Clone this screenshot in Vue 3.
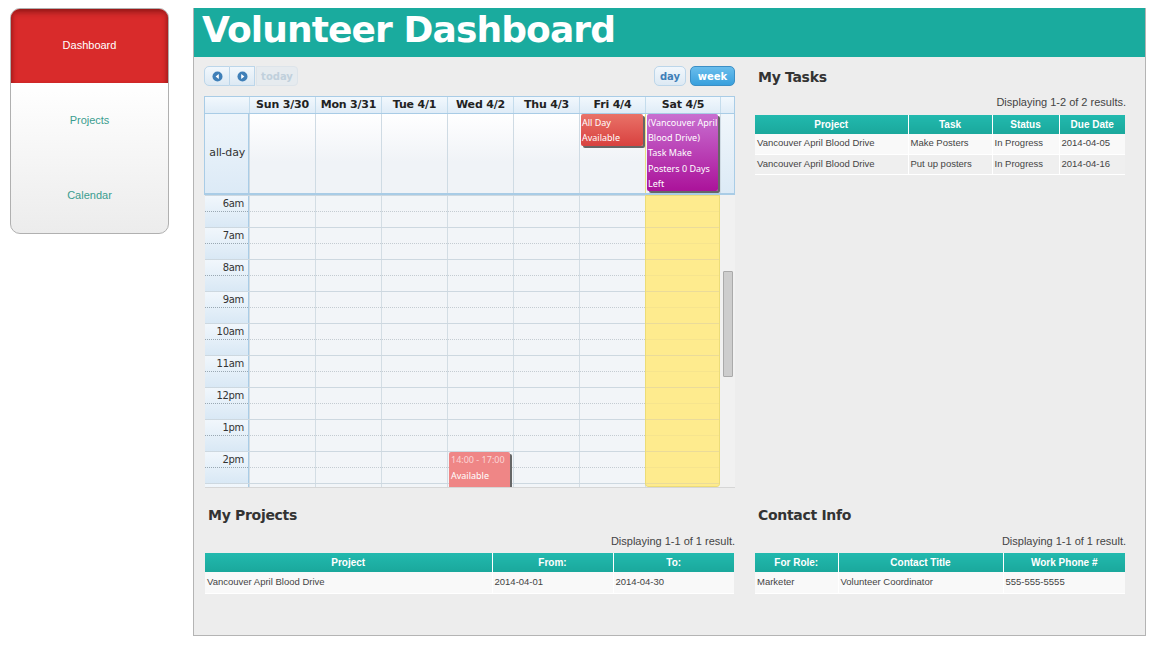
<template>
  <div class="page">
    <nav class="sidebar">
      <a v-for="(item, i) in menu" :key="item" class="menu-item" :class="{ active: i === 0 }">{{ item }}</a>
    </nav>

    <main class="main">
      <h1 class="title">Volunteer Dashboard</h1>

      <div class="content">
        <section class="calendar">
          <div class="toolbar">
            <div class="btn-group">
              <button class="cal-btn first">
                <svg width="11" height="11" viewBox="0 0 11 11"><circle cx="5.5" cy="5.5" r="5" fill="#3f7fb8" /><path d="M6.8 3 3.6 5.5 6.8 8z" fill="#fff" /></svg>
              </button>
              <button class="cal-btn">
                <svg width="11" height="11" viewBox="0 0 11 11"><circle cx="5.5" cy="5.5" r="5" fill="#3f7fb8" /><path d="M4.2 3 7.4 5.5 4.2 8z" fill="#fff" /></svg>
              </button>
              <button class="cal-btn today">today</button>
            </div>
            <div class="views">
              <button class="cal-btn view">day</button>
              <button class="cal-btn view on">week</button>
            </div>
          </div>

          <div class="cal-row head-row">
            <div class="axis"></div>
            <div v-for="d in days" :key="d" class="day-head">{{ d }}</div>
            <div class="gutter"></div>
          </div>

          <div class="cal-row allday-row">
            <div class="axis allday-label">all-day</div>
            <div v-for="d in days" :key="d" class="allday-cell"></div>
            <div class="gutter"></div>
            <div class="event allday-event red">All Day<br />Available</div>
            <div class="event allday-event purple">(Vancouver April<br />Blood Drive)<br />Task Make<br />Posters 0 Days<br />Left</div>
          </div>

          <div class="scroller">
            <div class="time-grid">
              <div v-for="h in hours" :key="h" class="cal-row hour-row">
                <div class="axis hour-label"><span>{{ h }}</span></div>
                <div v-for="d in days" :key="d" class="hour-cell"></div>
              </div>
              <div class="today-col"></div>
              <div class="event timed">
                <div class="time">14:00 - 17:00</div>
                <div>Available</div>
              </div>
            </div>
            <div class="scrollbar"><div class="thumb"></div></div>
          </div>
        </section>

        <section class="panel tasks">
          <h2>My Tasks</h2>
          <p class="summary">Displaying 1-2 of 2 results.</p>
          <table>
            <colgroup><col style="width:153px" /><col style="width:84px" /><col style="width:67px" /><col style="width:66px" /></colgroup>
            <thead><tr><th>Project</th><th>Task</th><th>Status</th><th>Due Date</th></tr></thead>
            <tbody>
              <tr v-for="t in tasks" :key="t[1]"><td v-for="c in t" :key="c">{{ c }}</td></tr>
            </tbody>
          </table>
        </section>

        <section class="panel projects">
          <h2>My Projects</h2>
          <p class="summary">Displaying 1-1 of 1 result.</p>
          <table>
            <colgroup><col style="width:287px" /><col style="width:121px" /><col style="width:121px" /></colgroup>
            <thead><tr><th>Project</th><th>From:</th><th>To:</th></tr></thead>
            <tbody>
              <tr><td>Vancouver April Blood Drive</td><td>2014-04-01</td><td>2014-04-30</td></tr>
            </tbody>
          </table>
        </section>

        <section class="panel contact">
          <h2>Contact Info</h2>
          <p class="summary">Displaying 1-1 of 1 result.</p>
          <table>
            <colgroup><col style="width:83px" /><col style="width:165px" /><col style="width:122px" /></colgroup>
            <thead><tr><th>For Role:</th><th>Contact Title</th><th>Work Phone #</th></tr></thead>
            <tbody>
              <tr><td>Marketer</td><td>Volunteer Coordinator</td><td>555-555-5555</td></tr>
            </tbody>
          </table>
        </section>
      </div>
    </main>
  </div>
</template>

<script setup>
const menu = ['Dashboard', 'Projects', 'Calendar']
const days = ['Sun 3/30', 'Mon 3/31', 'Tue 4/1', 'Wed 4/2', 'Thu 4/3', 'Fri 4/4', 'Sat 4/5']
const hours = ['6am', '7am', '8am', '9am', '10am', '11am', '12pm', '1pm', '2pm', '3pm']
const tasks = [
  ['Vancouver April Blood Drive', 'Make Posters', 'In Progress', '2014-04-05'],
  ['Vancouver April Blood Drive', 'Put up posters', 'In Progress', '2014-04-16']
]
</script>

<style>
html, body {
  background: #fff;
}
</style>

<style scoped>
.page {
  display: flex;
  align-items: flex-start;
  gap: 24px;
  padding: 8px 8px 0 10px;
  width: 1154px;
  height: 646px;
  box-sizing: border-box;
  overflow: hidden;
  font-family: "Liberation Sans", Arial, sans-serif;
}

.sidebar {
  width: 159px;
  flex: none;
  box-sizing: border-box;
  height: 226px;
  border: 1px solid #b0b0b0;
  border-radius: 10px;
  overflow: hidden;
  background: linear-gradient(#fff 33%, #ececec);
}
.menu-item {
  display: flex;
  height: 75px;
  box-sizing: border-box;
  padding-bottom: 1px;
  align-items: center;
  justify-content: center;
  font-size: 11px;
  color: #3a9d8f;
}
.menu-item.active {
  height: 74px;
  padding-bottom: 2px;
  color: #fff;
  background: #d92b2b;
  box-shadow: inset 0 6px 6px -3px #8f1717, inset 4px 0 5px -3px #9a1a1a, inset -4px 0 5px -3px #9a1a1a;
}

.main {
  width: 953px;
  height: 628px;
  flex: none;
  box-sizing: border-box;
  border: 1px solid #b4b4b4;
  border-top: 0;
  background: #ededed;
}
.title {
  margin: 0;
  height: 49px;
  padding-left: 8px;
  background: #1aab9e;
  color: #fff;
  letter-spacing: -0.9px;
  font: bold 36px/44px "DejaVu Sans", Verdana, sans-serif;
}

.content {
  display: grid;
  grid-template-columns: 531px 371px;
  grid-template-rows: 431px auto;
  column-gap: 20px;
  padding: 9px 0 0 10px;
}

.calendar {
  font-family: "DejaVu Sans", Verdana, sans-serif;
}
.toolbar {
  display: flex;
  justify-content: space-between;
  height: 30px;
}
.btn-group,
.views {
  display: flex;
  height: 20px;
}
.views {
  gap: 4px;
}
.cal-btn {
  box-sizing: border-box;
  width: 25px;
  height: 20px;
  padding: 0;
  display: flex;
  align-items: center;
  justify-content: center;
  border: 1px solid #bcd6ea;
  border-left-width: 0;
  background: linear-gradient(#f1f7fc, #dde9f3);
  font: bold 10px "DejaVu Sans", Verdana, sans-serif;
  color: #3f7fb8;
}
.cal-btn.first {
  width: 26px;
  border-left-width: 1px;
  border-radius: 5px 0 0 5px;
}
.cal-btn.today {
  width: 42px;
  margin-left: 1px;
  border: 1px solid #dde4ea;
  border-radius: 0 4px 4px 0;
  background: #e6ebef;
  color: #c0d0dc;
}
.cal-btn.view {
  width: 32px;
  border-left-width: 1px;
  border-radius: 5px;
}
.cal-btn.view.on {
  width: 45px;
  color: #fff;
  background: linear-gradient(#69bdec, #39a0dd);
  border-color: #3b8fc6;
}

.cal-row {
  display: grid;
  grid-template-columns: 44px repeat(6, 66px) 75px 14px;
}
.head-row {
  height: 17px;
  box-sizing: border-box;
  border: 1px solid #a9cce6;
  background: linear-gradient(#f2f8fd, #dfecf7);
  border-bottom: 0;
}
.day-head {
  border-left: 1px solid #c4dcec;
  text-align: center;
  font-size: 11px;
  font-weight: bold;
  line-height: 15px;
  color: #222;
  letter-spacing: -0.2px;
}
.gutter {
  border-left: 1px solid #c4dcec;
}
.allday-row {
  position: relative;
  height: 82px;
  box-sizing: border-box;
  border: 1px solid #a9cce6;
  border-bottom-width: 2px;
  background: linear-gradient(#fff, #f0f3f7 60%);
}
.axis {
  background: linear-gradient(#f4f9fd, #dbe9f5);
  box-sizing: border-box;
  border-right: 1px solid #a9cce6;
}
.head-row .axis {
  background: none;
  border-right: 0;
}
.allday-label {
  font-size: 11px;
  letter-spacing: -0.2px;
  line-height: 78px;
  color: #333;
  text-align: right;
  padding-right: 3px;
  background: linear-gradient(#eef5fb, #dceaf6);
}
.allday-cell {
  border-left: 1px solid #cfdbe4;
}
.allday-row .allday-cell:first-of-type {
  border-left: 0;
}
.allday-row .allday-cell:nth-of-type(8) {
  border-left-color: #eadf86;
}
.allday-row .gutter {
  background: linear-gradient(#f0f6fb, #dceaf6);
  border-left-color: #cfdbe4;
}

.event {
  position: absolute;
  box-sizing: border-box;
  color: #fff;
  font-family: "Noto Sans", Tahoma, sans-serif;
  font-size: 9px;
  line-height: 15.2px;
  padding: 1px 1px 0;
  border-radius: 2px;
  box-shadow: 2px 2px 0 #666;
  white-space: nowrap;
}
.allday-event {
  top: 0;
}
.red {
  left: 376px;
  width: 62px;
  height: 32px;
  background: linear-gradient(#e97268, #d8413f);
}
.purple {
  left: 442px;
  width: 71px;
  height: 77px;
  background: linear-gradient(#c86fd0, #ab129a);
}

.scroller {
  display: flex;
  height: 293px;
  overflow: hidden;
  border-bottom: 1px solid #d6d6d6;
  box-sizing: border-box;
  margin-left: 1px;
}
.time-grid {
  position: relative;
  width: 515px;
  flex: none;
}
.hour-row {
  height: 32px;
  box-sizing: border-box;
  border-top: 1px solid #cdd8e0;
  grid-template-columns: 44px repeat(6, 66px) 75px;
}
.hour-label {
  font-size: 10px;
  letter-spacing: -0.3px;
  color: #333;
  text-align: right;
  line-height: 15px;
  background: linear-gradient(#f1f7fc, #d9e8f5);
}
.hour-label span {
  display: block;
  height: 16px;
  box-sizing: border-box;
  border-bottom: 1px dotted #9aa8b2;
  padding-right: 4px;
}
.hour-cell {
  box-sizing: border-box;
  border-left: 1px solid #d3dde4;
  background: #f2f5f8;
}
.hour-cell::before {
  content: "";
  display: block;
  height: 16px;
  box-sizing: border-box;
  border-bottom: 1px dotted #c4ccd2;
}
.today-col {
  position: absolute;
  left: 440px;
  top: 0;
  bottom: 0;
  width: 75px;
  box-sizing: border-box;
  border: 1px solid #ecdc78;
  border-radius: 0 0 3px 3px;
  background: repeating-linear-gradient(#feeb8e 0, #feeb8e 15px, #f6e48e 15px, #f6e48e 16px, #feeb8e 16px, #feeb8e 31px, #eadb9a 31px, #eadb9a 32px);
}
.timed {
  left: 244px;
  top: 257px;
  width: 61px;
  height: 60px;
  padding: 0 0 0 2px;
  background: #ef8686;
  line-height: 16px;
}
.time {
  color: #fbd7d7;
}
.scrollbar {
  flex: 1;
  background: #f1f1f1;
  padding: 76px 2px 0 3px;
}
.thumb {
  box-sizing: border-box;
  height: 106px;
  background: #cdcdcd;
  border: 1px solid #aaa;
  border-radius: 1px;
}

.panel h2 {
  margin: 0;
  padding-left: 3px;
  letter-spacing: -0.3px;
  font: bold 14px/20px "DejaVu Sans", Verdana, sans-serif;
  color: #333;
}
.tasks h2 {
  margin-top: 1px;
}
.projects h2,
.contact h2 {
  margin-top: 8px;
}
.projects h2 {
  padding-left: 4px;
}
.summary {
  margin: 10px 0 0;
  height: 18px;
  text-align: right;
  font-size: 11px;
  line-height: 13px;
  color: #444;
}
.tasks .summary {
  margin-top: 9px;
  height: 19px;
}
.panel table {
  table-layout: fixed;
  width: 370px;
  border-collapse: collapse;
  font-size: 9.5px;
}
.projects table {
  width: 529px;
  margin-left: 1px;
}
.panel th {
  height: 19px;
  padding: 0;
  background: linear-gradient(#22b9ae, #1aa89c);
  color: #fff;
  font-size: 10px;
  font-weight: bold;
  border-left: 1px solid #fff;
}
.panel th:first-child,
.panel td:first-child {
  border-left: 0;
}
.panel td {
  height: 20px;
  padding: 0 2px 2px;
  box-sizing: border-box;
  color: #444;
  background: #f9f9f9;
  border-left: 1px solid #fff;
  border-bottom: 1px solid #fff;
  white-space: nowrap;
  overflow: hidden;
}
.panel tbody tr:nth-child(2) td {
  background: #efefef;
}
.projects td,
.contact td {
  height: 21px;
}
</style>
